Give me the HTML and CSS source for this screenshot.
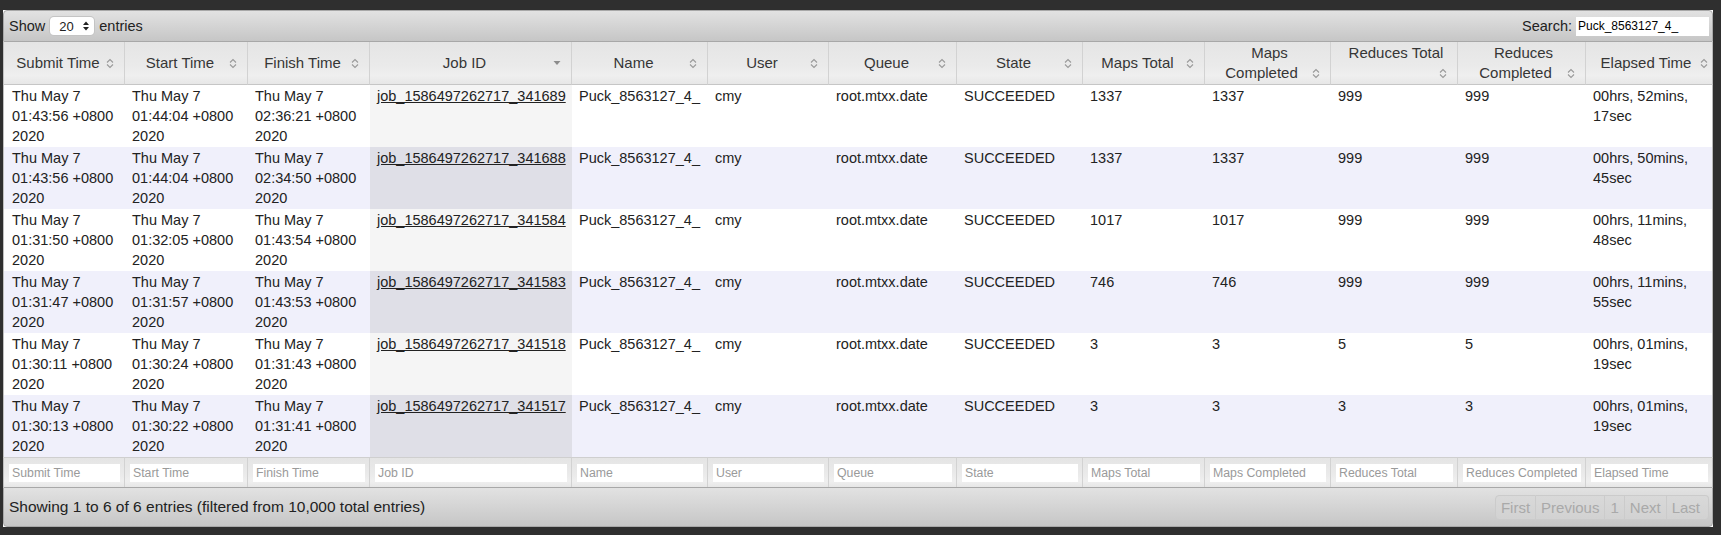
FILE: index.html
```html
<!DOCTYPE html>
<html>
<head>
<meta charset="utf-8">
<title>Jobs</title>
<link rel="stylesheet" href="styles.css">
</head>
<body>
<div class="wrapper">
  <div class="toolbar top">
    <div class="length">Show
      <span class="select"><span class="sel-val">20</span><svg class="sel-arrows" width="6" height="10" viewBox="0 0 6 10"><polygon points="0,4 3,0.5 6,4" fill="#222"/><polygon points="0,6 3,9.5 6,6" fill="#222"/></svg></span>
      entries</div>
    <div class="search">Search: <input class="search-input" type="text" value="Puck_8563127_4_"></div>
  </div>
  <table class="jobs">
    <thead>
      <tr>
        <th class="c-submit"><div class="sortwrap">Submit Time<span class="sort-icon"><svg width="8" height="11" viewBox="0 0 8 11"><path d="M1 4.5 L4 1.5 L7 4.5 M1 6.5 L4 9.5 L7 6.5" fill="none" stroke="#9a9a9a" stroke-width="1.1"/></svg></span></div></th>
        <th class="c-start"><div class="sortwrap">Start Time<span class="sort-icon"><svg width="8" height="11" viewBox="0 0 8 11"><path d="M1 4.5 L4 1.5 L7 4.5 M1 6.5 L4 9.5 L7 6.5" fill="none" stroke="#9a9a9a" stroke-width="1.1"/></svg></span></div></th>
        <th class="c-finish"><div class="sortwrap">Finish Time<span class="sort-icon"><svg width="8" height="11" viewBox="0 0 8 11"><path d="M1 4.5 L4 1.5 L7 4.5 M1 6.5 L4 9.5 L7 6.5" fill="none" stroke="#9a9a9a" stroke-width="1.1"/></svg></span></div></th>
        <th class="c-job"><div class="sortwrap">Job ID<span class="sort-icon"><svg width="8" height="11" viewBox="0 0 8 11"><polygon points="0.5,3 7.5,3 4,7" fill="#8c8c8c"/></svg></span></div></th>
        <th class="c-name"><div class="sortwrap">Name<span class="sort-icon"><svg width="8" height="11" viewBox="0 0 8 11"><path d="M1 4.5 L4 1.5 L7 4.5 M1 6.5 L4 9.5 L7 6.5" fill="none" stroke="#9a9a9a" stroke-width="1.1"/></svg></span></div></th>
        <th class="c-user"><div class="sortwrap">User<span class="sort-icon"><svg width="8" height="11" viewBox="0 0 8 11"><path d="M1 4.5 L4 1.5 L7 4.5 M1 6.5 L4 9.5 L7 6.5" fill="none" stroke="#9a9a9a" stroke-width="1.1"/></svg></span></div></th>
        <th class="c-queue"><div class="sortwrap">Queue<span class="sort-icon"><svg width="8" height="11" viewBox="0 0 8 11"><path d="M1 4.5 L4 1.5 L7 4.5 M1 6.5 L4 9.5 L7 6.5" fill="none" stroke="#9a9a9a" stroke-width="1.1"/></svg></span></div></th>
        <th class="c-state"><div class="sortwrap">State<span class="sort-icon"><svg width="8" height="11" viewBox="0 0 8 11"><path d="M1 4.5 L4 1.5 L7 4.5 M1 6.5 L4 9.5 L7 6.5" fill="none" stroke="#9a9a9a" stroke-width="1.1"/></svg></span></div></th>
        <th class="c-mt"><div class="sortwrap">Maps Total<span class="sort-icon"><svg width="8" height="11" viewBox="0 0 8 11"><path d="M1 4.5 L4 1.5 L7 4.5 M1 6.5 L4 9.5 L7 6.5" fill="none" stroke="#9a9a9a" stroke-width="1.1"/></svg></span></div></th>
        <th class="c-mc"><div class="sortwrap">Maps Completed<span class="sort-icon"><svg width="8" height="11" viewBox="0 0 8 11"><path d="M1 4.5 L4 1.5 L7 4.5 M1 6.5 L4 9.5 L7 6.5" fill="none" stroke="#9a9a9a" stroke-width="1.1"/></svg></span></div></th>
        <th class="c-rt"><div class="sortwrap">Reduces Total<span class="sort-icon"><svg width="8" height="11" viewBox="0 0 8 11"><path d="M1 4.5 L4 1.5 L7 4.5 M1 6.5 L4 9.5 L7 6.5" fill="none" stroke="#9a9a9a" stroke-width="1.1"/></svg></span></div></th>
        <th class="c-rc"><div class="sortwrap">Reduces Completed<span class="sort-icon"><svg width="8" height="11" viewBox="0 0 8 11"><path d="M1 4.5 L4 1.5 L7 4.5 M1 6.5 L4 9.5 L7 6.5" fill="none" stroke="#9a9a9a" stroke-width="1.1"/></svg></span></div></th>
        <th class="c-el"><div class="sortwrap">Elapsed Time<span class="sort-icon"><svg width="8" height="11" viewBox="0 0 8 11"><path d="M1 4.5 L4 1.5 L7 4.5 M1 6.5 L4 9.5 L7 6.5" fill="none" stroke="#9a9a9a" stroke-width="1.1"/></svg></span></div></th>
      </tr>
    </thead>
    <tbody>
      <tr>
        <td>Thu May 7 01:43:56 +0800 2020</td><td>Thu May 7 01:44:04 +0800 2020</td><td>Thu May 7 02:36:21 +0800 2020</td>
        <td class="sorted"><a href="#">job_1586497262717_341689</a></td><td>Puck_8563127_4_</td><td>cmy</td><td>root.mtxx.date</td><td>SUCCEEDED</td>
        <td>1337</td><td>1337</td><td>999</td><td>999</td><td>00hrs, 52mins, 17sec</td>
      </tr>
      <tr>
        <td>Thu May 7 01:43:56 +0800 2020</td><td>Thu May 7 01:44:04 +0800 2020</td><td>Thu May 7 02:34:50 +0800 2020</td>
        <td class="sorted"><a href="#">job_1586497262717_341688</a></td><td>Puck_8563127_4_</td><td>cmy</td><td>root.mtxx.date</td><td>SUCCEEDED</td>
        <td>1337</td><td>1337</td><td>999</td><td>999</td><td>00hrs, 50mins, 45sec</td>
      </tr>
      <tr>
        <td>Thu May 7 01:31:50 +0800 2020</td><td>Thu May 7 01:32:05 +0800 2020</td><td>Thu May 7 01:43:54 +0800 2020</td>
        <td class="sorted"><a href="#">job_1586497262717_341584</a></td><td>Puck_8563127_4_</td><td>cmy</td><td>root.mtxx.date</td><td>SUCCEEDED</td>
        <td>1017</td><td>1017</td><td>999</td><td>999</td><td>00hrs, 11mins, 48sec</td>
      </tr>
      <tr>
        <td>Thu May 7 01:31:47 +0800 2020</td><td>Thu May 7 01:31:57 +0800 2020</td><td>Thu May 7 01:43:53 +0800 2020</td>
        <td class="sorted"><a href="#">job_1586497262717_341583</a></td><td>Puck_8563127_4_</td><td>cmy</td><td>root.mtxx.date</td><td>SUCCEEDED</td>
        <td>746</td><td>746</td><td>999</td><td>999</td><td>00hrs, 11mins, 55sec</td>
      </tr>
      <tr>
        <td>Thu May 7 01:30:11 +0800 2020</td><td>Thu May 7 01:30:24 +0800 2020</td><td>Thu May 7 01:31:43 +0800 2020</td>
        <td class="sorted"><a href="#">job_1586497262717_341518</a></td><td>Puck_8563127_4_</td><td>cmy</td><td>root.mtxx.date</td><td>SUCCEEDED</td>
        <td>3</td><td>3</td><td>5</td><td>5</td><td>00hrs, 01mins, 19sec</td>
      </tr>
      <tr>
        <td>Thu May 7 01:30:13 +0800 2020</td><td>Thu May 7 01:30:22 +0800 2020</td><td>Thu May 7 01:31:41 +0800 2020</td>
        <td class="sorted"><a href="#">job_1586497262717_341517</a></td><td>Puck_8563127_4_</td><td>cmy</td><td>root.mtxx.date</td><td>SUCCEEDED</td>
        <td>3</td><td>3</td><td>3</td><td>3</td><td>00hrs, 01mins, 19sec</td>
      </tr>
    </tbody>
    <tfoot>
      <tr>
        <th><input class="filter" type="text" placeholder="Submit Time"></th>
        <th><input class="filter" type="text" placeholder="Start Time"></th>
        <th><input class="filter" type="text" placeholder="Finish Time"></th>
        <th><input class="filter" type="text" placeholder="Job ID"></th>
        <th><input class="filter" type="text" placeholder="Name"></th>
        <th><input class="filter" type="text" placeholder="User"></th>
        <th><input class="filter" type="text" placeholder="Queue"></th>
        <th><input class="filter" type="text" placeholder="State"></th>
        <th><input class="filter" type="text" placeholder="Maps Total"></th>
        <th><input class="filter" type="text" placeholder="Maps Completed"></th>
        <th><input class="filter" type="text" placeholder="Reduces Total"></th>
        <th><input class="filter" type="text" placeholder="Reduces Completed"></th>
        <th><input class="filter" type="text" placeholder="Elapsed Time"></th>
      </tr>
    </tfoot>
  </table>
  <div class="toolbar bottom">
    <div class="info">Showing 1 to 6 of 6 entries (filtered from 10,000 total entries)</div>
    <div class="paginate">
      <span class="pbtn">First</span><span class="pbtn">Previous</span><span class="pbtn">1</span><span class="pbtn">Next</span><span class="pbtn">Last</span>
    </div>
  </div>
</div>
</body>
</html>
```

FILE: styles.css
```css
* { box-sizing: border-box; }
html, body { margin: 0; padding: 0; }
body {
  background: #2f2f2f;
  font-family: "Liberation Sans", Arial, Helvetica, sans-serif;
  color: #222;
  padding: 10px 0 8px 3px;
}
.wrapper { width: 1710px; background: #fff; }

.toolbar {
  display: flex;
  justify-content: space-between;
  align-items: center;
  border: 1px solid #a8a8a8;
  background: linear-gradient(#e2e2e2, #c6c6c6);
  color: #222;
  font-size: 14.5px;
}
.toolbar.top { height: 32px; border-radius: 4px 4px 0 0; padding: 0 3px 0 5px; }
.toolbar.bottom { height: 40px; border-radius: 0 0 4px 4px; padding: 0 3px 0 5px; }

.length { display: flex; align-items: center; }
.select {
  display: inline-flex;
  align-items: center;
  justify-content: space-between;
  width: 44px;
  height: 18px;
  margin: 0 5px 0 5px;
  padding: 0 5px 0 9px;
  background: #fff;
  border-radius: 4px;
  box-shadow: 0 0 0 1px #c4c4c4;
  font-size: 13px;
}
.sel-arrows { display: block; }
.search { display: flex; align-items: center; }
.search-input {
  width: 133px;
  height: 19px;
  margin-left: 4px;
  border: none;
  outline: none;
  padding: 0 2px;
  background: #fff;
  font-family: "Liberation Sans", Arial, sans-serif;
  font-size: 12px;
  color: #000;
}

.jobs {
  width: 1710px;
  table-layout: fixed;
  border-collapse: separate;
  border-spacing: 0;
}
.c-submit { width: 122px; }
.c-start { width: 123px; }
.c-finish { width: 122px; }
.c-job { width: 202px; }
.c-name { width: 136px; }
.c-user { width: 121px; }
.c-queue { width: 128px; }
.c-state { width: 126px; }
.c-mt { width: 122px; }
.c-mc { width: 126px; }
.c-rt { width: 127px; }
.c-rc { width: 128px; }
.c-el { width: 127px; }

.jobs thead th {
  height: 43px;
  padding: 1px 6px 1px 10px;
  font-size: 15px;
  font-weight: normal;
  line-height: 20px;
  color: #363636;
  vertical-align: middle;
  border-right: 1px solid #d2d2d2;
  border-bottom: 1px solid #c6c6c6;
  background: linear-gradient(#e5e5e5, #eaeaea 55%, #efefef 80%, #e7e7e7);
}
.jobs thead th.c-el { padding-right: 0; }
.sortwrap { text-align: center; }
.sort-icon {
  float: right;
  width: 16px;
  height: 20px;
  display: flex;
  align-items: center;
  justify-content: center;
}
.sort-icon svg { display: block; }

.jobs thead th:first-child,
.jobs tbody td:first-child,
.jobs tfoot th:first-child { border-left: 1px solid #c0c0c0; }
.jobs thead th:last-child,
.jobs tbody td:last-child,
.jobs tfoot th:last-child { border-right: 1px solid #b9b9b9; }

.jobs tbody td {
  height: 62px;
  padding: 1px 7px;
  font-size: 14.5px;
  line-height: 20px;
  vertical-align: top;
  color: #222;
}
.jobs tbody td:first-child { padding-left: 8px; }
.jobs tbody tr:nth-child(odd) { background: #fff; }
.jobs tbody tr:nth-child(even) { background: #f0f0fb; }
.jobs tbody tr:nth-child(odd) td.sorted { background: #f5f5f5; }
.jobs tbody tr:nth-child(even) td.sorted { background: #dfdfe7; }
.jobs tbody a { color: #222; text-decoration: underline; }

.jobs tfoot th {
  height: 30px;
  padding: 5px 4px 5px 5px;
  font-weight: normal;
  border-top: 1px solid #cfcfcf;
  border-right: 1px solid #d2d2d2;
  background: linear-gradient(#e5e5e5, #eaeaea 55%, #efefef 80%, #e7e7e7);
}
.filter {
  display: block;
  width: 100%;
  height: 18px;
  border: none;
  outline: none;
  padding: 0 1px 0 3px;
  background: #fff;
  font-family: "Liberation Sans", Arial, sans-serif;
  font-size: 12.3px;
  color: #222;
}
.filter::placeholder { color: #9a9a9a; }

.info { font-size: 15.5px; color: #222; }
.paginate { display: flex; }
.pbtn {
  padding: 0 5px;
  height: 25px;
  line-height: 23px;
  font-size: 15px;
  color: #a9a9a9;
  border: 1px solid #cbcbcb;
  border-left: none;
  background: linear-gradient(#d9d9d9, #d2d2d2);
}
.pbtn:first-child { border-left: 1px solid #cbcbcb; border-radius: 4px 0 0 4px; }
.pbtn:last-child { border-radius: 0 4px 4px 0; padding-right: 8px; }
```
